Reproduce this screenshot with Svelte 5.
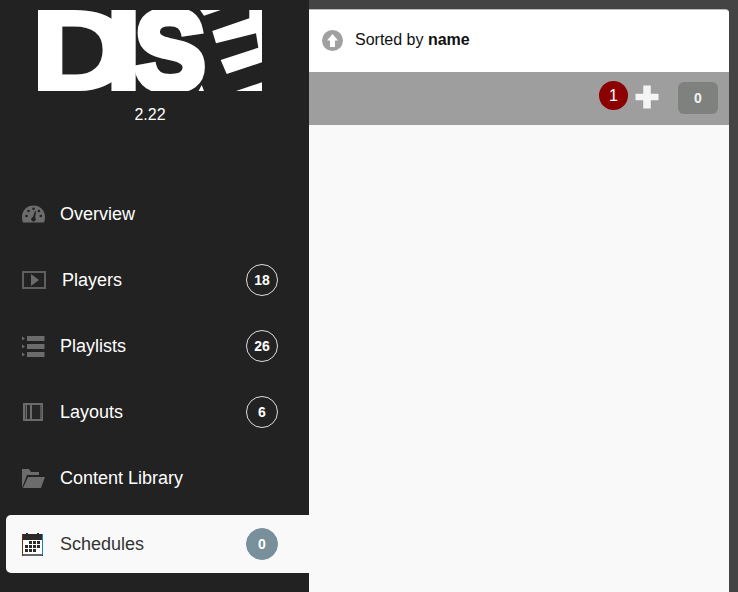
<script>
  const items = [
    { label: 'Overview', icon: 'gauge' },
    { label: 'Players', icon: 'play', count: 18 },
    { label: 'Playlists', icon: 'list', count: 26 },
    { label: 'Layouts', icon: 'film', count: 6 },
    { label: 'Content Library', icon: 'folder' },
    { label: 'Schedules', icon: 'calendar', count: 0, active: true }
  ];
</script>

<div class="page">
  <aside class="sidebar">
    <div class="brand">
      <svg class="logo" width="224" height="81" viewBox="0 0 224 81">
        <defs>
          <clipPath id="logo-clip"><rect width="224" height="81" /></clipPath>
        </defs>
        <g clip-path="url(#logo-clip)">
          <text class="mark" transform="translate(-7.750 79) scale(1.25 1)">D</text>
          <text class="mark stem" x="70" y="79">I</text>
          <text class="mark heavy" transform="translate(97 79) scale(.94 1)">S</text>
          <path d="M162 0h20.700L166 5.700zM163.700 75l2.300 6h-5.500zM198 81l26-8.700V81z" fill="#fff" />
          <path d="M174.300 21l37-12.700V0H224v52.300L188.700 64l-6-14 37.600-12.300-2.300-14.400-40 10z" fill="#fff" />
        </g>
      </svg>
      <div class="version">2.22</div>
    </div>

    <nav class="menu">
      {#each items as item}
        <div class="item" class:active={item.active}>
          <span class="icon">
            {#if item.icon === 'gauge'}
              <svg width="23" height="18" viewBox="0 0 23 18">
                <path d="M1 17.500C.4 16 0 14 0 12 0 5.400 5 .5 11.500.5S23 5.400 23 12c0 2-.4 4-1 5.500z" fill="#6c6c6c" />
                <circle cx="4.500" cy="11" r="1.300" fill="#222" />
                <circle cx="6.500" cy="6" r="1.300" fill="#222" />
                <circle cx="11.500" cy="3.800" r="1.300" fill="#222" />
                <circle cx="17" cy="6" r="1.300" fill="#222" />
                <circle cx="18.800" cy="11" r="1.300" fill="#222" />
                <path d="M10.300 14l2.700-8 1 .3-1.200 8.700z" fill="#222" />
                <circle cx="11.500" cy="14.300" r="2.200" fill="#222" />
              </svg>
            {:else if item.icon === 'play'}
              <svg width="24" height="18" viewBox="0 0 24 18">
                <path d="M1 1h22v16H1z" fill="none" stroke="#5f5f5f" stroke-width="2" />
                <path d="M9 3l8 6-8 6z" fill="#6c6c6c" />
              </svg>
            {:else if item.icon === 'list'}
              <svg width="23" height="21" viewBox="0 0 23 21">
                <path d="M0 .5l3 2-3 2zM0 8.500l3 2-3 2zM0 16.500l3 2-3 2z" fill="#6c6c6c" />
                <path d="M5 0h17.500v5H5zM5 8h17.500v5H5zM5 16h17.500v5H5z" fill="#6c6c6c" />
              </svg>
            {:else if item.icon === 'film'}
              <svg class="film" width="20" height="18" viewBox="0 0 20 18">
                <path d="M0 0h20v18H0z" fill="#6c6c6c" />
                <path d="M4 2h3v14H4zM9 2h8v14H9z" fill="#262626" />
                <path d="M2 2h1v14H2zM17.500 2h1v14h-1z" fill="#3e3e3e" />
              </svg>
            {:else if item.icon === 'folder'}
              <svg width="23" height="19" viewBox="0 0 23 19">
                <path d="M0 19V0h7l2 3h8v3H5z" fill="#6c6c6c" />
                <path d="M1 19l5-11h17l-4 11z" fill="#6c6c6c" />
              </svg>
            {:else if item.icon === 'calendar'}
              <svg width="21" height="23" viewBox="0 0 21 23">
                <path d="M0 1h4V0h2v1h9V0h2v1h4v22H0z" fill="#2b2b2b" />
                <path d="M1 7h19v14H1z" fill="#fff" />
                <path d="M7 8h3v3H7zM11 8h3v3h-3zM15 8h3v3h-3zM3 12h3v3H3zM7 12h3v3H7zM11 12h3v3h-3zM15 12h3v3h-3zM3 16h3v3H3zM7 16h3v3H7zM11 16h3v3h-3z" fill="#2b2b2b" />
                <path d="M0 1h1v22H0z" fill="#7a2a10" />
                <path d="M20 1h1v21h-1z" fill="#1a7fd0" />
                <path d="M1 21h19v2H1z" fill="#666" />
              </svg>
            {/if}
          </span>
          <span class="label" class:shifted={item.icon === 'play'}>{item.label}</span>
          {#if item.count !== undefined}
            <span class="count">{item.count}</span>
          {/if}
        </div>
      {/each}
    </nav>
  </aside>

  <main class="panel">
    <div class="sortbar">
      <svg width="21" height="21" viewBox="0 0 21 21">
        <circle cx="10.500" cy="10.500" r="10.500" fill="#a0a0a0" />
        <path d="M10.500 4l5.500 6.500h-3V17H8v-6.500H5z" fill="#fff" />
      </svg>
      <span class="sorted">Sorted by <b>name</b></span>
    </div>
    <div class="toolbar">
      <span class="alert">1</span>
      <svg class="plus" width="24" height="24" viewBox="0 0 24 24">
        <path d="M8.250 .5h7.500v8.250h7.750v6.500H15.750v8.250h-7.500v-8.250H.5v-6.500h7.750z" fill="#f4f4f4" />
      </svg>
      <span class="total">0</span>
    </div>
    <div class="body"></div>
  </main>
</div>

<style>
  :global(body) {
    margin: 0;
    background: #444;
  }

  .page {
    display: flex;
    width: 738px;
    height: 592px;
    overflow: hidden;
    background: #444;
    font-family: "Liberation Sans", Arial, sans-serif;
  }

  .sidebar {
    flex: none;
    width: 309px;
    background: #222;
    color: #fff;
  }

  .brand {
    display: flex;
    flex-direction: column;
    align-items: center;
    width: 300px;
    height: 185px;
    padding-top: 10px;
    box-sizing: border-box;
  }

  .logo {
    display: block;
  }

  .mark {
    font-size: 112px;
    font-weight: bold;
    fill: #fff;
    stroke: #fff;
    stroke-width: 4px;
  }

  .mark.stem {
    stroke-width: 8px;
  }

  .mark.heavy {
    stroke-width: 8px;
  }

  .version {
    margin-top: 15px;
    font-size: 16px;
    line-height: 18px;
  }

  .item {
    display: flex;
    align-items: center;
    height: 58px;
    margin: 0 0 8px 6px;
    padding: 0 31px 0 16px;
    border-radius: 5px 0 0 5px;
    font-size: 18px;
  }

  .item.active {
    background: #f9f9f9;
    color: #333;
  }

  .icon {
    display: flex;
    align-items: center;
    flex: none;
    width: 38px;
  }

  .film {
    margin-left: 1px;
  }

  .label {
    flex: 1;
  }

  .label.shifted {
    margin-left: 2px;
  }

  .count {
    display: flex;
    align-items: center;
    justify-content: center;
    width: 30px;
    height: 30px;
    border: 1px solid #ddd;
    border-radius: 50%;
    color: #fff;
    font-size: 14px;
    font-weight: bold;
  }

  .active .count {
    border-color: #78909c;
    background: #78909c;
  }

  .panel {
    display: flex;
    flex-direction: column;
    flex: none;
    width: 420px;
    margin-top: 9px;
    border-top: 1px solid #bbb;
    border-radius: 0 4px 0 0;
    overflow: hidden;
    background: #f9f9f9;
  }

  .sortbar {
    display: flex;
    align-items: center;
    flex: none;
    height: 62px;
    padding: 0 0 2px 13px;
    box-sizing: border-box;
    background: #fff;
  }

  .sorted {
    margin-left: 12px;
    color: #111;
    font-size: 16px;
  }

  .toolbar {
    display: flex;
    align-items: center;
    flex: none;
    height: 53px;
    padding: 0 11px 0 290px;
    box-sizing: border-box;
    background: #9e9e9e;
  }

  .alert {
    display: flex;
    align-items: center;
    justify-content: center;
    width: 29px;
    height: 29px;
    margin-bottom: 6px;
    border-radius: 50%;
    background: #8b0000;
    color: #fff;
    font-size: 16px;
  }

  .plus {
    margin-left: 7px;
    margin-bottom: 3px;
  }

  .total {
    display: flex;
    align-items: center;
    justify-content: center;
    width: 40px;
    height: 32px;
    margin-left: 19px;
    margin-bottom: 2px;
    border-radius: 6px;
    background: #7f817e;
    color: #f2f2f2;
    font-size: 14px;
    font-weight: bold;
  }

  .body {
    flex: 1;
  }
</style>
